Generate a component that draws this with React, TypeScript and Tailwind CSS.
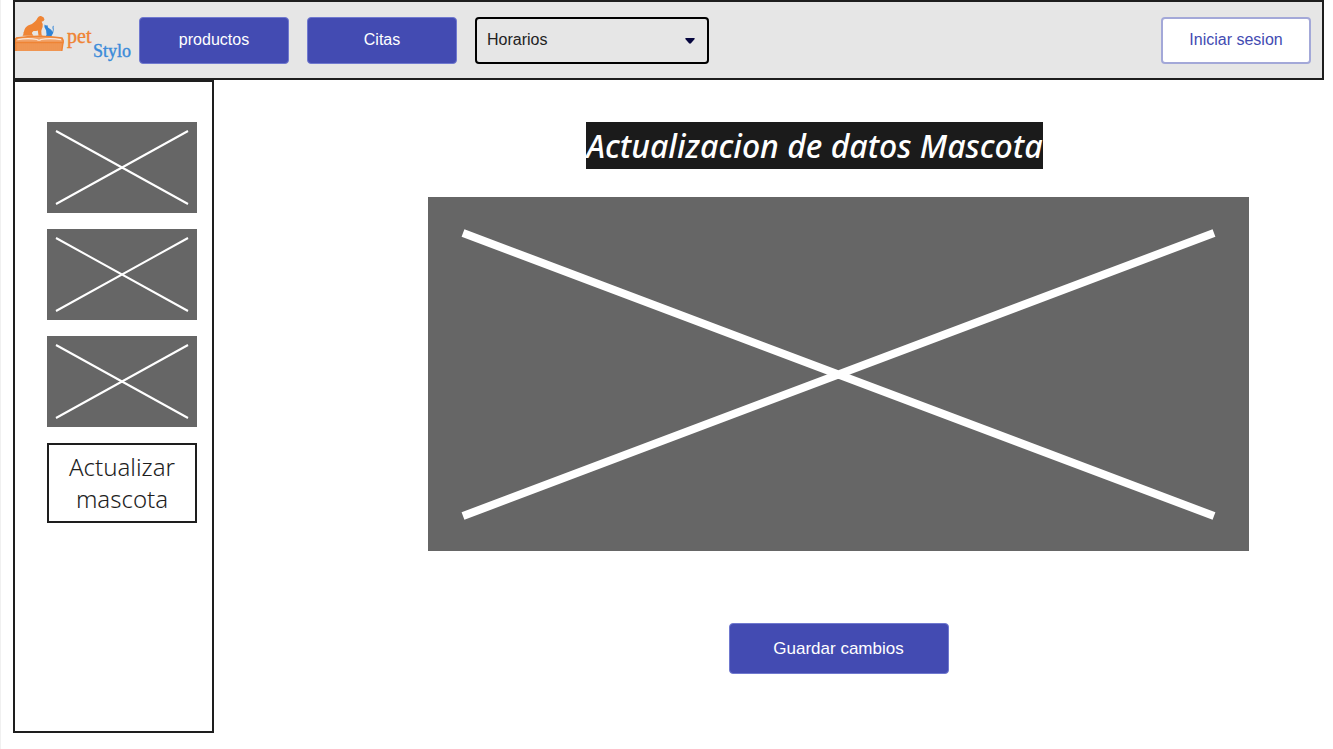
import React from "react";

function Logo() {
  return (
    <svg viewBox="0 0 124 60" className="h-[60px] w-[124px] shrink-0" role="img" aria-label="pet Stylo">
      <path
        d="M7.500 25.800L8.500 24Q8 22.500 9 21.500Q9.500 17.500 13 15.500Q18 14 20 11.500Q21.500 10 22.500 8Q24 5.500 26 6L28.500 7.200L29.500 9.500Q29 11.500 26.600 11.800Q28.500 14 27.600 17Q26.800 19 26.300 21L26.500 24.500L27.600 25.800H23.500L22.800 20.500Q20.500 21.200 18.500 21Q16 23 17.500 24.300L18.500 25.800Z"
        fill="#ef8434"
      />
      <path
        d="M29.500 14.500L31 15.600L32.500 15.200L33 17.500Q36.500 19.300 37.300 22Q38.500 19.500 37.500 18Q37 16 38.800 15.500Q38.300 17 38.700 19.500Q38.700 23.500 36.500 26H31Q32 24.500 31.300 22.500Q31.500 20.500 30.300 18.800Q29 17 29.500 14.500Z"
        fill="#2e83d6"
      />
      <path d="M1 28Q24 24.500 47 28Q49.300 31 47.800 34L46.800 41H0.800V34Q-0.500 31 1 28Z" fill="#f1a268" />
      <path d="M1 28Q24 24.500 47 28Q49 31 47.800 34L46.800 41M0.800 41V34Q-0.500 31 1 28M1 32.500H47.500" fill="none" stroke="#ef8434" strokeWidth="1.4" />
      <path d="M2.500 29.700Q13 27.500 22 29.500Q24 31 26 29.500Q35 27.500 46 29.700" fill="none" stroke="#f9e9dc" strokeWidth="1.2" />
      <path d="M2 33V41M4 33V41M6 33V41M8 33V41M10 33V41M12 33V41M14 33V41M16 33V41M18 33V41M20 33V41M22 33V41M24 33V41M26 33V41M28 33V41M30 33V41M32 33V41M34 33V41M36 33V41M38 33V41M40 33V41M42 33V41M44 33V41M46 33V41" stroke="#ef8434" strokeWidth="0.8" />
      <text x="52" y="33" fill="#ef8434" stroke="#ef8434" strokeWidth="0.4" className="font-['Liberation_Serif',serif] text-[20px]">
        pet
      </text>
      <text x="78" y="47" fill="#3b8bd9" stroke="#3b8bd9" strokeWidth="0.4" className="font-['Liberation_Serif',serif] text-[18px]">
        Stylo
      </text>
    </svg>
  );
}

function NavButton({ children }: { children: React.ReactNode }) {
  return (
    <button type="button" className="h-[47px] w-[150px] shrink-0 rounded border border-[#7079cf] bg-[#434bb2] text-white">
      {children}
    </button>
  );
}

function Thumbnail() {
  return (
    <svg viewBox="0 0 150 91" className="block w-full bg-[#666]" role="img" aria-label="Imagen">
      <path d="M9 9L141 82M141 9L9 82" stroke="#fff" strokeWidth="2" />
    </svg>
  );
}

function Header() {
  return (
    <header className="flex h-20 items-center border-2 border-[#1e1e1e] bg-[#e6e6e6] pr-[11px] text-base">
      <Logo />
      <nav className="flex gap-[18px]">
        <NavButton>productos</NavButton>
        <NavButton>Citas</NavButton>
        <div className="relative">
          <select
            aria-label="Horarios"
            className="h-[47px] w-[234px] appearance-none rounded border-2 border-black bg-transparent px-[10px] text-[#222]"
          >
            <option>Horarios</option>
          </select>
          <svg viewBox="0 0 10 6" className="pointer-events-none absolute top-[21px] right-[14px] h-[6px] w-[10px]" aria-hidden="true">
            <path d="M1 0h8q1 0 .7 1L6 5.300q-1 .9-2 0L.3 1Q0 0 1 0z" fill="#07073f" />
          </svg>
        </div>
      </nav>
      <button type="button" className="ml-auto h-[47px] w-[150px] shrink-0 rounded border-2 border-[#a3a8d8] bg-white text-[#434bb2]">
        Iniciar sesion
      </button>
    </header>
  );
}

export default function App() {
  return (
    <div className="flex min-h-screen flex-col border-l border-[#f0f0f0] bg-white pr-[9px] pb-4 pl-3 font-['Liberation_Sans',Arial,sans-serif]">
      <Header />
      <div className="flex grow">
        <aside className="flex w-[201px] shrink-0 flex-col gap-4 border-2 border-[#1e1e1e] pt-10 pr-[15px] pl-8">
          <Thumbnail />
          <Thumbnail />
          <Thumbnail />
          <button
            type="button"
            className="h-20 border-2 border-[#1e1e1e] text-center font-['Noto_Sans',sans-serif] text-2xl leading-8 font-light text-[#1e1e1e]"
          >
            Actualizar mascota
          </button>
        </aside>
        <main className="flex grow flex-col items-center pt-[42px] pr-[75px] pl-[214px]">
          <h1 className="mr-12 bg-[#1b1b1b] font-['Noto_Sans',sans-serif] text-[32px] leading-[47px] font-medium whitespace-nowrap text-white italic">
            Actualizacion de datos Mascota
          </h1>
          <svg viewBox="0 0 821 354" className="mt-7 block w-full bg-[#666]" role="img" aria-label="Imagen de la mascota">
            <path d="M35 36L786 319M786 36L35 319" stroke="#fff" strokeWidth="8" />
          </svg>
          <button type="button" className="mt-[72px] h-[51px] w-[220px] rounded border border-[#7079cf] bg-[#434bb2] text-[17px] text-white">
            Guardar cambios
          </button>
        </main>
      </div>
    </div>
  );
}
